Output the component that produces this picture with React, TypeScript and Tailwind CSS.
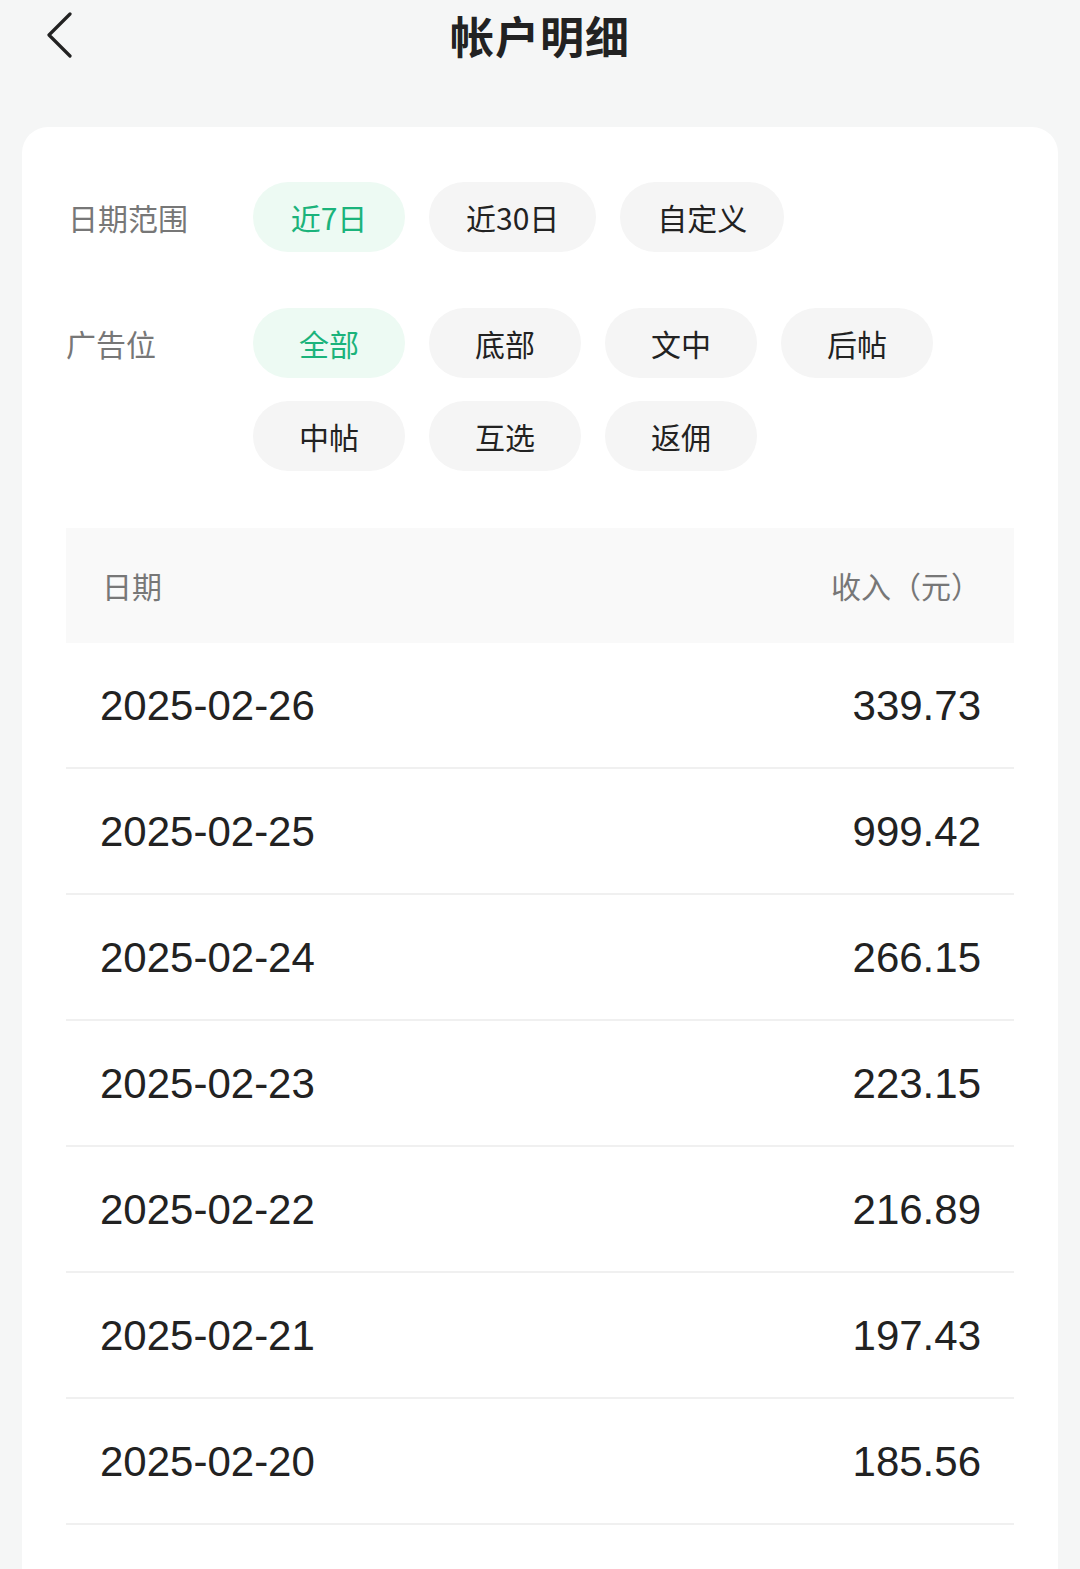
import { useState } from 'react'

const dateRanges = ['近7日', '近30日', '自定义']
const adSlots = ['全部', '底部', '文中', '后帖', '中帖', '互选', '返佣']

const records = [
  { date: '2025-02-26', amount: '339.73' },
  { date: '2025-02-25', amount: '999.42' },
  { date: '2025-02-24', amount: '266.15' },
  { date: '2025-02-23', amount: '223.15' },
  { date: '2025-02-22', amount: '216.89' },
  { date: '2025-02-21', amount: '197.43' },
  { date: '2025-02-20', amount: '185.56' },
]

const cjk = "font-['Noto_Sans_CJK_SC',sans-serif]"

function Chip({ label, active, onClick }: { label: string; active: boolean; onClick: () => void }) {
  return (
    <button
      onClick={onClick}
      className={`h-[70px] min-w-[152px] rounded-full px-[37px] text-[30px] leading-none ${cjk} ${
        active ? 'bg-[#edfaf3] text-[#1bb37b]' : 'bg-[#f5f5f5] text-[#222]'
      }`}
    >
      {label}
    </button>
  )
}

export default function App() {
  const [range, setRange] = useState('近7日')
  const [slot, setSlot] = useState('全部')

  return (
    <div className={`min-h-[1569px] bg-[#f5f6f6] ${cjk}`}>
      <div className="grid h-[70px] grid-cols-[1fr_auto_1fr] items-center px-[44px]">
        <button className="flex items-center">
          <svg width="30" height="46" viewBox="0 0 30 46" fill="none">
            <path d="M26 2 L5 23 L26 44" stroke="#222" strokeWidth="3.2" strokeLinecap="round" strokeLinejoin="round" />
          </svg>
        </button>
        <h1 className="text-[44px] font-bold leading-none tracking-[1px] text-[#222]">帐户明细</h1>
        <div />
      </div>

      <div className="mx-[22px] mt-[57px] rounded-t-[26px] bg-white px-[44px] pb-[80px] pt-[55px]">
        <div className="flex">
          <div className="flex h-[70px] w-[187px] shrink-0 items-center pl-[2px] text-[30px] text-[#777]">日期范围</div>
          <div className="flex flex-wrap gap-x-[24px] gap-y-[23px]">
            {dateRanges.map(r => (
              <Chip key={r} label={r} active={range === r} onClick={() => setRange(r)} />
            ))}
          </div>
        </div>

        <div className="mt-[56px] flex">
          <div className="flex h-[70px] w-[187px] shrink-0 items-center text-[30px] text-[#777]">广告位</div>
          <div className="flex w-[704px] flex-wrap gap-x-[24px] gap-y-[23px]">
            {adSlots.map(s => (
              <Chip key={s} label={s} active={slot === s} onClick={() => setSlot(s)} />
            ))}
          </div>
        </div>

        <div className="mt-[57px]">
          <div className="flex h-[115px] items-center justify-between bg-[#f9f9f9] pl-[36px] pr-[33px] text-[30px] text-[#777]">
            <span>日期</span>
            <span>收入（元）</span>
          </div>
          {records.map(r => (
            <div
              key={r.date}
              className="flex h-[126px] items-center justify-between border-b-2 border-[#f0f0f0] pl-[34px] pr-[33px] font-['Liberation_Sans',sans-serif] text-[42px] text-[#222]"
            >
              <span className="pt-[-2px]">{r.date}</span>
              <span>{r.amount}</span>
            </div>
          ))}
        </div>
      </div>
    </div>
  )
}
